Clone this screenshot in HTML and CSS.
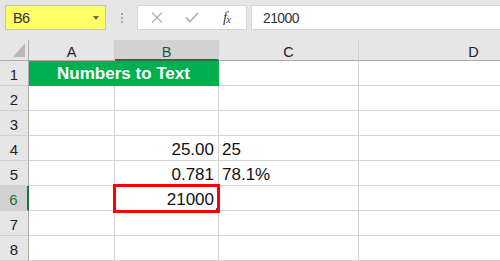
FILE: index.html
```html
<!DOCTYPE html>
<html>
<head>
<meta charset="utf-8">
<link rel="stylesheet" href="styles.css">
</head>
<body>
<div class="app">
  <div class="toolbar">
    <div class="namebox"><span class="nb-text">B6</span><span class="nb-arrow"></span></div>
    <div class="dots"><i></i><i></i><i></i></div>
    <div class="fbtns">
      <svg class="ic-x" width="12" height="11" viewBox="0 0 12 11"><path d="M1 0.5 L11 10.5 M11 0.5 L1 10.5" stroke="#b3b3b3" stroke-width="1.4" fill="none"/></svg>
      <svg class="ic-check" width="14" height="11" viewBox="0 0 14 11"><path d="M1 5.5 L5 9.5 L13 1" stroke="#b3b3b3" stroke-width="1.8" fill="none"/></svg>
      <span class="fx">f<span class="fx-x">x</span></span>
    </div>
    <div class="finput">21000</div>
  </div>
  <div class="sheet">
    <div class="corner"><span class="tri"></span></div>
    <div class="ch">A</div>
    <div class="ch sel">B</div>
    <div class="ch">C</div>
    <div class="ch">D</div>

    <div class="rh">1</div>
    <div class="c title">Numbers to Text</div>
    <div class="c"></div>
    <div class="c"></div>

    <div class="rh">2</div>
    <div class="c"></div><div class="c"></div><div class="c"></div><div class="c"></div>

    <div class="rh">3</div>
    <div class="c"></div><div class="c"></div><div class="c"></div><div class="c"></div>

    <div class="rh">4</div>
    <div class="c"></div><div class="c num">25.00</div><div class="c txt">25</div><div class="c"></div>

    <div class="rh">5</div>
    <div class="c"></div><div class="c num">0.781</div><div class="c txt">78.1%</div><div class="c"></div>

    <div class="rh active">6</div>
    <div class="c"></div><div class="c num selected">21000<span class="handle"></span></div><div class="c"></div><div class="c"></div>

    <div class="rh">7</div>
    <div class="c"></div><div class="c"></div><div class="c"></div><div class="c"></div>

    <div class="rh">8</div>
    <div class="c"></div><div class="c"></div><div class="c"></div><div class="c"></div>
  </div>
</div>
</body>
</html>
```
FILE: styles.css
```css
* { box-sizing: border-box; }
html, body { margin: 0; padding: 0; }
body {
  width: 500px;
  height: 261px;
  overflow: hidden;
  background: #fff;
  font-family: "Liberation Sans", Arial, sans-serif;
}
.app { width: 500px; height: 261px; overflow: hidden; }

.toolbar {
  height: 40px;
  background: #e6e6e6;
  display: flex;
  align-items: flex-start;
  padding: 5px 0 0 5px;
}
.namebox {
  width: 101px;
  height: 25px;
  background: #ffff66;
  border: 1px solid #c8c8a0;
  display: flex;
  align-items: center;
  justify-content: space-between;
  padding: 0 6px 0 7px;
}
.nb-text { font-size: 14.5px; color: #333; letter-spacing: -0.6px; }
.nb-arrow {
  width: 0; height: 0;
  border-left: 3.5px solid transparent;
  border-right: 3.5px solid transparent;
  border-top: 4px solid #707040;
}
.dots {
  width: 31px;
  height: 25px;
  display: flex;
  flex-direction: column;
  align-items: center;
  justify-content: center;
  gap: 2px;
}
.dots i { display: block; width: 2px; height: 2px; background: #a8a8a8; }
.fbtns {
  width: 110px;
  height: 25px;
  background: #fff;
  border: 1px solid #d6d6d6;
  display: flex;
  align-items: center;
  padding-left: 13px;
}
.ic-x { margin-right: 22px; }
.ic-check { margin-right: 24px; }
.fx {
  font-family: "Liberation Serif", "Times New Roman", serif;
  font-style: italic;
  font-size: 15px;
  color: #444;
  line-height: 1;
}
.fx-x { font-size: 11px; position: relative; top: 1px; margin-left: -1px; }
.finput {
  flex: 1;
  height: 25px;
  margin-left: 4px;
  background: #fff;
  border: 1px solid #d6d6d6;
  border-right: none;
  font-size: 14px;
  color: #333;
  padding-left: 11px;
  display: flex;
  align-items: center;
  letter-spacing: -0.6px;
}

.sheet {
  display: grid;
  grid-template-columns: 29px 86px 104px 140px 230px;
  grid-template-rows: 21px repeat(8, 25px);
}
.corner {
  background: #e6e6e6;
  border-right: 1px solid #ababab;
  border-bottom: 1px solid #ababab;
  position: relative;
}
.tri {
  position: absolute;
  right: 3px;
  bottom: 3px;
  width: 12px;
  height: 14px;
  background: #b8b8b8;
  clip-path: polygon(100% 0, 100% 100%, 0 100%);
}
.ch {
  background: #e6e6e6;
  border-right: 1px solid #cfcfcf;
  border-bottom: 1px solid #ababab;
  display: flex;
  align-items: flex-end;
  justify-content: center;
  padding-bottom: 1px;
  font-size: 14.5px;
  line-height: 1;
  color: #222;
}
.ch.sel {
  background: #d2d2d2;
  border-bottom: 2px solid #217346;
  color: #1e5c3a;
  padding-bottom: 0;
}

.rh {
  background: #e6e6e6;
  border-right: 1px solid #ababab;
  border-bottom: 1px solid #d0d0d0;
  display: flex;
  align-items: flex-end;
  justify-content: center;
  padding-bottom: 3px;
  font-size: 15px;
  line-height: 1;
  color: #222;
}
.rh.active {
  background: #d2d2d2;
  border-right: 2px solid #217346;
  color: #217346;
}

.c {
  border-right: 1px solid #d4d4d4;
  border-bottom: 1px solid #d4d4d4;
  display: flex;
  align-items: flex-end;
  font-size: 17px;
  line-height: 1;
  color: #111;
  padding-bottom: 2px;
}
.c.title {
  grid-column: span 2;
  background: #00b050;
  border-right: 1px solid #00b050;
  border-bottom: 1px solid #00b050;
  color: #fff;
  font-weight: bold;
  justify-content: center;
  padding-bottom: 3px;
}
.c.num { justify-content: flex-end; padding-right: 4px; }
.c.txt { padding-left: 3px; }
.c.selected { position: relative; }
.c.selected::after {
  content: "";
  position: absolute;
  left: -2px;
  top: -2px;
  right: -2px;
  bottom: -3px;
  border: 3px solid #ff0000;
}
.handle {
  position: absolute;
  right: 0;
  bottom: 0;
  width: 2px;
  height: 2px;
  background: #217346;
}
```
